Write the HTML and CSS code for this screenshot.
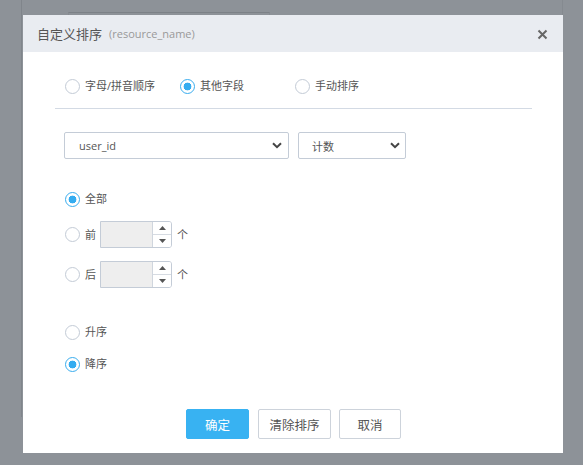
FILE: index.html
```html
<!DOCTYPE html>
<html lang="zh">
<head>
<meta charset="utf-8">
<title>自定义排序</title>
<link rel="stylesheet" href="styles.css">
</head>
<body>
<div class="page">
  <div class="panel">
    <div class="ghost-input"></div>
  </div>
</div>

<div class="modal">
  <div class="modal-header">
    <span class="modal-title">自定义排序</span>
    <span class="modal-sub">(resource_name)</span>
    <span class="modal-close">
      <svg width="11" height="11" viewBox="0 0 11 11"><path d="M1.5 1.5 L9.5 9.5 M9.5 1.5 L1.5 9.5" stroke="#666" stroke-width="2" stroke-linecap="butt"/></svg>
    </span>
  </div>
  <div class="modal-body">
    <div class="mode-row">
      <label class="radio mode-item"><span class="dot"></span><span class="txt">字母/拼音顺序</span></label>
      <label class="radio mode-item"><span class="dot checked"></span><span class="txt">其他字段</span></label>
      <label class="radio mode-item"><span class="dot"></span><span class="txt">手动排序</span></label>
    </div>
    <div class="sep"></div>
    <div class="select-row">
      <div class="select select-field"><span>user_id</span>
        <svg class="chev" width="10" height="7" viewBox="0 0 10 7"><path d="M1 1.2 L5 5.2 L9 1.2" fill="none" stroke="#444" stroke-width="2"/></svg>
      </div>
      <div class="select select-agg"><span>计数</span>
        <svg class="chev" width="10" height="7" viewBox="0 0 10 7"><path d="M1 1.2 L5 5.2 L9 1.2" fill="none" stroke="#444" stroke-width="2"/></svg>
      </div>
    </div>

    <div class="range">
      <label class="radio r-all"><span class="dot checked"></span><span class="txt">全部</span></label>
      <div class="r-num r-first">
        <label class="radio"><span class="dot"></span><span class="txt">前</span></label>
        <div class="num">
          <div class="num-field"></div>
          <div class="spin">
            <span class="spin-up"><svg width="7" height="4" viewBox="0 0 7 4"><path d="M0 4 L3.5 0 L7 4 Z" fill="#555"/></svg></span>
            <span class="spin-down"><svg width="7" height="4" viewBox="0 0 7 4"><path d="M0 0 L3.5 4 L7 0 Z" fill="#555"/></svg></span>
          </div>
        </div>
        <span class="unit">个</span>
      </div>
      <div class="r-num r-last">
        <label class="radio"><span class="dot"></span><span class="txt">后</span></label>
        <div class="num">
          <div class="num-field"></div>
          <div class="spin">
            <span class="spin-up"><svg width="7" height="4" viewBox="0 0 7 4"><path d="M0 4 L3.5 0 L7 4 Z" fill="#555"/></svg></span>
            <span class="spin-down"><svg width="7" height="4" viewBox="0 0 7 4"><path d="M0 0 L3.5 4 L7 0 Z" fill="#555"/></svg></span>
          </div>
        </div>
        <span class="unit">个</span>
      </div>
    </div>

    <div class="order">
      <label class="radio o-asc"><span class="dot"></span><span class="txt">升序</span></label>
      <label class="radio o-desc"><span class="dot checked"></span><span class="txt">降序</span></label>
    </div>

    <div class="actions">
      <button class="btn btn-primary">确定</button>
      <button class="btn btn-clear">清除排序</button>
      <button class="btn btn-cancel">取消</button>
    </div>
  </div>
</div>
</body>
</html>
```

FILE: styles.css
```css
html, body {
  margin: 0;
  padding: 0;
}
body {
  width: 583px;
  height: 465px;
  background: #8d9298;
  font-family: "Open Sans", "Noto Sans CJK SC", sans-serif;
  overflow: hidden;
  position: relative;
}
.page {
  padding-left: 21px;
  height: 465px;
  box-sizing: border-box;
}
.panel {
  width: 542px;
  height: 417px;
  border-left: 1px solid #80858b;
  border-right: 1px solid #858a90;
  box-sizing: border-box;
  padding-top: 12px;
  padding-left: 46px;
}
.ghost-input {
  width: 202px;
  height: 20px;
  border-top: 1px solid #7c8187;
  border-left: 1px solid #878c92;
  border-right: 1px solid #878c92;
  box-sizing: border-box;
}

.modal {
  position: absolute;
  left: 23px;
  top: 15px;
  width: 540px;
  height: 438px;
  background: #fff;
  display: flex;
  flex-direction: column;
}
.modal-header {
  height: 37px;
  background: #e9ecf1;
  display: flex;
  align-items: center;
  padding-left: 14px;
  padding-right: 15px;
  box-sizing: border-box;
}
.modal-title {
  font-size: 13px;
  color: #555;
}
.modal-sub {
  font-size: 11px;
  color: #999;
  margin-left: 7px;
}
.modal-close {
  margin-left: auto;
  display: flex;
  align-items: center;
  padding-top: 1px;
}

.modal-body {
  flex: 1;
  padding: 0 31px 0 32px;
  display: flex;
  flex-direction: column;
}

.radio {
  display: flex;
  align-items: center;
  height: 16px;
  font-size: 11px;
  color: #555;
}
.dot {
  width: 15px;
  height: 15px;
  border: 1px solid #c3cbd6;
  border-radius: 50%;
  box-sizing: border-box;
  flex: none;
  background: #fff;
}
.dot.checked {
  border-color: #3aadee;
  background: radial-gradient(circle, #34acf0 0 3.6px, #fff 4.2px);
}
.radio .txt {
  margin-left: 5px;
  line-height: 16px;
}

.mode-row {
  display: flex;
  margin-top: 26px;
  padding-left: 10px;
}
.mode-item {
  width: 115px;
}
.sep {
  height: 1px;
  background: #d3dae4;
  margin-top: 14px;
}

.select-row {
  display: flex;
  gap: 9px;
  margin-top: 23px;
  padding-left: 9px;
}
.select {
  height: 27px;
  border: 1px solid #c4ccd7;
  border-radius: 2px;
  box-sizing: border-box;
  display: flex;
  align-items: center;
  font-size: 11px;
  color: #555;
}
.select-field {
  width: 225px;
  padding-left: 14px;
  padding-right: 6px;
}
.select-agg {
  width: 108px;
  padding-left: 13px;
  padding-right: 5px;
}
.chev {
  margin-left: auto;
}

.range {
  display: flex;
  flex-direction: column;
  padding-left: 10px;
  margin-top: 32px;
}
.r-num {
  display: flex;
  align-items: center;
  height: 27px;
}
.r-first {
  margin-top: 14px;
}
.r-last {
  margin-top: 13px;
}
.r-num .radio .txt {
  width: 15px;
}
.num {
  display: flex;
  width: 72px;
  height: 27px;
  border: 1px solid #c4ccd7;
  border-radius: 0 3px 3px 0;
  box-sizing: border-box;
  overflow: hidden;
}
.num-field {
  flex: 1;
  background: #eeeeee;
  border-right: 1px solid #d0d6de;
}
.spin {
  width: 18px;
  display: flex;
  flex-direction: column;
  background: #fff;
}
.spin-up, .spin-down {
  flex: 1;
  display: flex;
  align-items: center;
  justify-content: center;
}
.spin-up {
  border-bottom: 1px solid #d6dbe2;
}
.unit {
  font-size: 11px;
  color: #555;
  margin-left: 5px;
  margin-top: -1px;
}

.order {
  display: flex;
  flex-direction: column;
  padding-left: 10px;
  margin-top: 36px;
  gap: 16px;
}

.actions {
  display: flex;
  justify-content: center;
  margin-top: 37px;
  padding-left: 0;
}
.btn {
  height: 30px;
  font-family: "Open Sans", "Noto Sans CJK SC", sans-serif;
  font-size: 12.5px;
  border-radius: 2px;
  box-sizing: border-box;
  padding: 0;
  cursor: pointer;
}
.btn-primary {
  width: 63px;
  background: #38b2f2;
  border: 1px solid #38b2f2;
  color: #fff;
}
.btn-clear {
  width: 73px;
  margin-left: 9px;
  background: #fff;
  border: 1px solid #cdd3db;
  color: #555;
}
.btn-cancel {
  width: 62px;
  margin-left: 8px;
  background: #fff;
  border: 1px solid #cdd3db;
  color: #555;
}
```
